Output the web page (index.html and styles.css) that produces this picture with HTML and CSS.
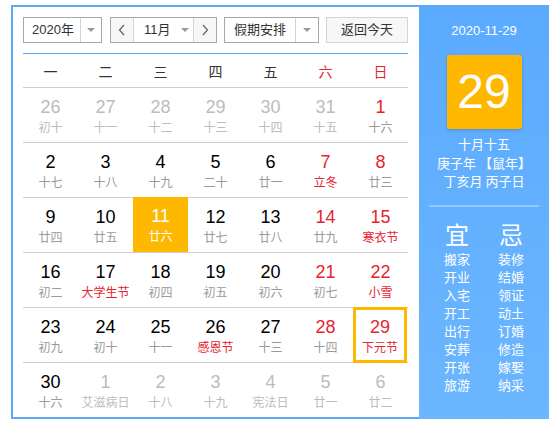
FILE: index.html
```html
<!DOCTYPE html>
<html lang="zh-CN">
<head>
<meta charset="utf-8">
<title>万年历</title>
<link rel="stylesheet" href="styles.css">
</head>
<body>
<div class="cal">
  <div class="main">
    <div class="toolbar">
      <div class="sel sel-year"><span class="sel-text">2020年</span><span class="sel-arrow"><i class="tri"></i></span></div>
      <div class="sel sel-month">
        <span class="nav"><svg width="8" height="12" viewBox="0 0 8 12"><polyline points="6,1 1.5,6 6,11" fill="none" stroke="#666" stroke-width="1.3"/></svg></span>
        <span class="month-text">11月<i class="tri"></i></span>
        <span class="nav nav-r"><svg width="8" height="12" viewBox="0 0 8 12"><polyline points="2,1 6.5,6 2,11" fill="none" stroke="#666" stroke-width="1.3"/></svg></span>
      </div>
      <div class="sel sel-hol"><span class="sel-text">假期安排</span><span class="sel-arrow"><i class="tri"></i></span></div>
      <div class="btn-today">返回今天</div>
    </div>
    <div class="week">
      <span>一</span><span>二</span><span>三</span><span>四</span><span>五</span><span class="red">六</span><span class="red">日</span>
    </div>
    <div class="grid">
      <div class="row">
        <div class="cell other"><b>26</b><em>初十</em></div>
        <div class="cell other"><b>27</b><em>十一</em></div>
        <div class="cell other"><b>28</b><em>十二</em></div>
        <div class="cell other"><b>29</b><em>十三</em></div>
        <div class="cell other"><b>30</b><em>十四</em></div>
        <div class="cell other"><b>31</b><em>十五</em></div>
        <div class="cell"><b class="red">1</b><em>十六</em></div>
      </div>
      <div class="row">
        <div class="cell"><b>2</b><em>十七</em></div>
        <div class="cell"><b>3</b><em>十八</em></div>
        <div class="cell"><b>4</b><em>十九</em></div>
        <div class="cell"><b>5</b><em>二十</em></div>
        <div class="cell"><b>6</b><em>廿一</em></div>
        <div class="cell"><b class="red">7</b><em class="red">立冬</em></div>
        <div class="cell"><b class="red">8</b><em>廿三</em></div>
      </div>
      <div class="row">
        <div class="cell"><b>9</b><em>廿四</em></div>
        <div class="cell"><b>10</b><em>廿五</em></div>
        <div class="cell today"><b>11</b><em>廿六</em></div>
        <div class="cell"><b>12</b><em>廿七</em></div>
        <div class="cell"><b>13</b><em>廿八</em></div>
        <div class="cell"><b class="red">14</b><em>廿九</em></div>
        <div class="cell"><b class="red">15</b><em class="red">寒衣节</em></div>
      </div>
      <div class="row">
        <div class="cell"><b>16</b><em>初二</em></div>
        <div class="cell"><b>17</b><em class="red">大学生节</em></div>
        <div class="cell"><b>18</b><em>初四</em></div>
        <div class="cell"><b>19</b><em>初五</em></div>
        <div class="cell"><b>20</b><em>初六</em></div>
        <div class="cell"><b class="red">21</b><em>初七</em></div>
        <div class="cell"><b class="red">22</b><em class="red">小雪</em></div>
      </div>
      <div class="row">
        <div class="cell"><b>23</b><em>初九</em></div>
        <div class="cell"><b>24</b><em>初十</em></div>
        <div class="cell"><b>25</b><em>十一</em></div>
        <div class="cell"><b>26</b><em class="red">感恩节</em></div>
        <div class="cell"><b>27</b><em>十三</em></div>
        <div class="cell"><b class="red">28</b><em>十四</em></div>
        <div class="cell selected"><b class="red">29</b><em class="red">下元节</em></div>
      </div>
      <div class="row last">
        <div class="cell"><b>30</b><em>十六</em></div>
        <div class="cell other"><b>1</b><em>艾滋病日</em></div>
        <div class="cell other"><b>2</b><em>十八</em></div>
        <div class="cell other"><b>3</b><em>十九</em></div>
        <div class="cell other"><b>4</b><em>宪法日</em></div>
        <div class="cell other"><b>5</b><em>廿一</em></div>
        <div class="cell other"><b>6</b><em>廿二</em></div>
      </div>
    </div>
  </div>
  <div class="side">
    <div class="side-date">2020-11-29</div>
    <div class="big-day">29</div>
    <div class="lunar">
      <div>十月十五</div>
      <div>庚子年 【鼠年】</div>
      <div>丁亥月 丙子日</div>
    </div>
    <div class="sep"></div>
    <div class="yiji">
      <div class="col">
        <div class="yj-title">宜</div>
        <div>搬家</div><div>开业</div><div>入宅</div><div>开工</div><div>出行</div><div>安葬</div><div>开张</div><div>旅游</div>
      </div>
      <div class="col">
        <div class="yj-title">忌</div>
        <div>装修</div><div>结婚</div><div>领证</div><div>动土</div><div>订婚</div><div>修造</div><div>嫁娶</div><div>纳采</div>
      </div>
    </div>
  </div>
</div>
</body>
</html>
```

FILE: styles.css
```css
* { box-sizing: border-box; }
html, body { margin: 0; padding: 0; background: #fff; }
body {
  font-family: "Liberation Sans", "Noto Sans CJK SC", sans-serif;
  color: #333;
}
.cal {
  margin: 5px 0 0 11px;
  width: 538px;
  height: 414px;
  border: 2px solid #5ea8f6;
  display: flex;
}
.main {
  width: 406px;
  padding: 10px 11px 0 10px;
}
.toolbar {
  display: flex;
  height: 26px;
}
.sel {
  display: flex;
  height: 26px;
  border: 1px solid #a8a8a8;
  font-size: 13px;
  line-height: 24px;
  color: #333;
  white-space: nowrap;
}
.sel-year { width: 79px; }
.sel-year .sel-text { width: 56px; text-align: center; padding-left: 2px; }
.sel-arrow {
  flex: 1;
  border-left: 1px solid #d4d4d4;
  display: flex;
  align-items: center;
  justify-content: center;
}
.tri {
  display: inline-block;
  width: 0; height: 0;
  border-left: 4px solid transparent;
  border-right: 4px solid transparent;
  border-top: 4px solid #999;
}
.sel-month { width: 107px; margin-left: 8px; }
.nav {
  width: 23px;
  flex: none;
  display: flex;
  align-items: center;
  justify-content: center;
  background: #f7f7f7;
  border-right: 1px solid #d4d4d4;
}
.nav-r { border-right: 0; border-left: 1px solid #d4d4d4; }
.month-text {
  flex: 1;
  display: flex;
  align-items: center;
  padding-left: 10px;
  gap: 10px;
  white-space: nowrap;
}
.sel-hol { width: 95px; margin-left: 7px; }
.sel-hol .sel-text { width: 70px; text-align: center; }
.btn-today {
  width: 82px;
  margin-left: 7px;
  height: 26px;
  border: 1px solid #d4d4d4;
  background: #f7f7f7;
  font-size: 13px;
  line-height: 24px;
  text-align: center;
  color: #333;
}
.week {
  margin-top: 10px;
  border-top: 1px solid #5ea8f6;
  border-bottom: 1px solid #cfcfcf;
  height: 35px;
  display: grid;
  grid-template-columns: repeat(7, 55px);
  align-items: center;
  font-size: 14px;
  font-family: "Noto Sans CJK SC", sans-serif;
  color: #333;
}
.week span { text-align: center; line-height: 18px; }
.red { color: #e8232f !important; }
.row {
  display: grid;
  grid-template-columns: repeat(7, 55px);
  height: 55px;
  border-bottom: 1px solid #cfcfcf;
}
.row.last { border-bottom: 0; height: 54px; }
.cell {
  display: flex;
  flex-direction: column;
  align-items: center;
  justify-content: center;
  gap: 2px;
  padding-top: 1px;
}
.cell b {
  font-weight: normal;
  font-size: 18px;
  line-height: 20px;
  color: #000;
}
.cell em {
  font-style: normal;
  font-size: 12px;
  line-height: 16px;
  color: #9a9a9a;
  font-family: "Noto Sans CJK SC", sans-serif;
}
.cell.other b, .cell.other em { color: #bcbcbc; }
.cell.today { background: #ffb800; margin-top: -1px; height: 55px; }
.cell.today b, .cell.today em { color: #fff; }
.cell.selected { border: 3px solid #ffb800; margin-top: -1px; height: 56px; margin-right: 1px; }
.side {
  width: 130px;
  margin: -2px -2px -2px 0;
  background: linear-gradient(#5aaafe, #6cb6fe);
  color: #fff;
  display: flex;
  flex-direction: column;
  align-items: center;
  padding-top: 18px;
}
.side-date { font-size: 13px; line-height: 16px; }
.big-day {
  margin-top: 16px;
  width: 75px;
  height: 74px;
  background: #ffb800;
  border-radius: 3px;
  box-shadow: 0 1px 3px rgba(0,0,0,0.2);
  font-size: 48px;
  line-height: 74px;
  text-align: center;
  color: #fff;
}
.lunar {
  margin-top: 6px;
  font-size: 13px;
  line-height: 18.5px;
  text-align: center;
  font-family: "Noto Sans CJK SC", sans-serif;
}
.sep {
  margin-top: 14px;
  width: 110px;
  height: 2px;
  background: #96c9ff;
}
.yiji {
  margin-top: 12px;
  display: flex;
  gap: 28px;
  font-family: "Noto Sans CJK SC", sans-serif;
  font-size: 13px;
  line-height: 18px;
  text-align: center;
}
.yj-title {
  font-size: 24px;
  line-height: 30px;
  margin-bottom: 1px;
}
```
